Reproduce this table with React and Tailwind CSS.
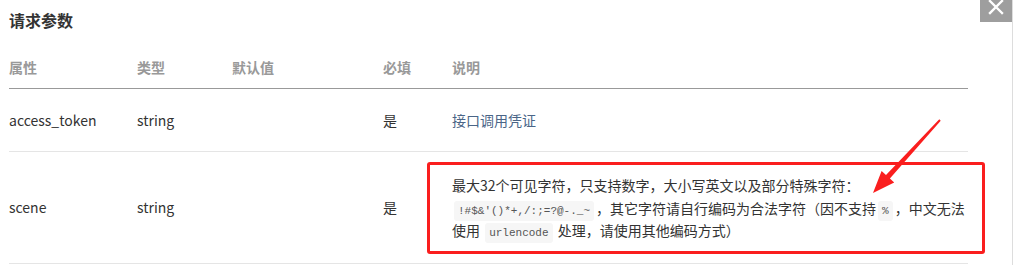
import React from 'react';

const font = { fontFamily: '"Noto Sans CJK SC", "Noto Sans", sans-serif' };

const Code = ({ children }) => (
    <code className="mx-[2px] rounded-[3px] bg-[#f6f6f6] px-[4px] py-[4px] font-['Liberation_Mono',monospace] text-[11px] leading-[12px] text-[#555]">
        {children}
    </code>
);

const App = () => {
    return (
        <div className="relative h-[265px] w-[1014px] overflow-hidden bg-white" style={font}>
            <div className="h-full w-[1013px] border-r border-[#dddddd] pl-[9px]">
                {/* Title */}
                <h2 className="pt-[8px] text-[16px] font-bold leading-[24px] text-[#333]">请求参数</h2>

                {/* Params table */}
                <table className="mt-[15px] w-[959px] table-fixed border-collapse text-left text-[14px] text-[#333]">
                    <colgroup>
                        <col className="w-[128px]" />
                        <col className="w-[95px]" />
                        <col className="w-[151px]" />
                        <col className="w-[69px]" />
                        <col />
                    </colgroup>
                    <thead>
                        <tr className="border-b border-[#999]">
                            <th className="py-[10px] font-bold leading-[21px] text-[#999]">属性</th>
                            <th className="py-[10px] font-bold leading-[21px] text-[#999]">类型</th>
                            <th className="py-[10px] font-bold leading-[21px] text-[#999]">默认值</th>
                            <th className="py-[10px] font-bold leading-[21px] text-[#999]">必填</th>
                            <th className="py-[10px] font-bold leading-[21px] text-[#999]">说明</th>
                        </tr>
                    </thead>
                    <tbody>
                        <tr className="border-b border-[#e5e5e5]">
                            <td className="py-5 leading-[22px]">access_token</td>
                            <td className="py-5 leading-[22px]">string</td>
                            <td className="py-5 leading-[22px]"></td>
                            <td className="py-5 leading-[22px]">是</td>
                            <td className="py-5 leading-[22px] text-[#4a6587]">接口调用凭证</td>
                        </tr>
                        <tr className="border-b border-[#e5e5e5]">
                            <td className="py-5 leading-[22px]">scene</td>
                            <td className="py-5 leading-[22px]">string</td>
                            <td className="py-5 leading-[22px]"></td>
                            <td className="py-5 leading-[22px]">是</td>
                            <td className="whitespace-nowrap pb-[21px] pt-[22px] leading-[22.5px]">
                                最大32个可见字符，只支持数字，大小写英文以及部分特殊字符：
                                <br />
                                <Code>{"!#$&'()*+,/:;=?@-._~"}</Code>，其它字符请自行编码为合法字符（因不支持<Code>%</Code>，中文无法
                                <br />
                                使用 <Code>urlencode</Code> 处理，请使用其他编码方式）
                            </td>
                        </tr>
                    </tbody>
                </table>
            </div>

            {/* Annotation: red box + arrow */}
            <div className="pointer-events-none absolute left-[427px] top-[162px] h-[92px] w-[558px] rounded-[3px] border-[3px] border-[#fa1e1e]" />
            <svg className="pointer-events-none absolute left-0 top-0" width="1014" height="265" viewBox="0 0 1014 265">
                <polygon
                    fill="#fa1e1e"
                    points="940.7,120.7 889.9,178.5 894.2,182.6 873,193 881.6,171.1 886,175 939.3,119.3"
                />
            </svg>

            {/* Close button */}
            <button className="absolute left-[980px] top-[-10px] flex h-[32px] w-[32px] items-center justify-center bg-[#9e9e9e] pt-[2px]">
                <svg width="16" height="16" viewBox="0 0 16 16" stroke="white" strokeWidth="2.4" strokeLinecap="square">
                    <path d="M2 2 L14 14 M14 2 L2 14" />
                </svg>
            </button>
        </div>
    );
};

export default App;
